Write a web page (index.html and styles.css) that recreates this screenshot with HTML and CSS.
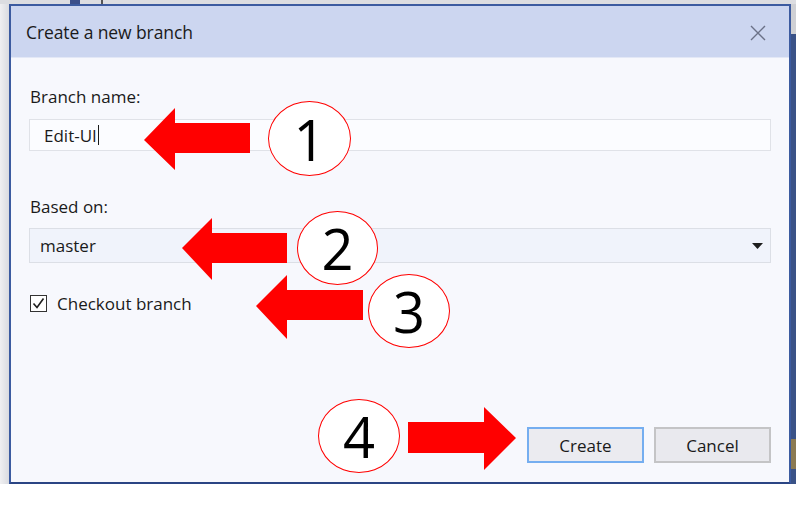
FILE: index.html
```html
<!DOCTYPE html>
<html>
<head>
<meta charset="utf-8">
<link rel="stylesheet" href="styles.css">
</head>
<body>
<div class="screen">
  <div class="topstrip"><span class="tick t1"></span><span class="tick t2"></span></div>
  <div class="row">
    <div class="leftstrip"></div>
    <div class="dialog">
      <div class="titlebar">
        <span class="title">Create a new branch</span>
        <svg class="close" width="18" height="18" viewBox="0 0 18 18"><path d="M2 2 L16 16 M16 2 L2 16" stroke="#6b7187" stroke-width="1.4" fill="none"/></svg>
      </div>
      <div class="content">
        <label class="label first">Branch name:</label>
        <div class="input"><span>Edit-UI</span><span class="caret"></span></div>
        <label class="label second">Based on:</label>
        <div class="select"><span>master</span><svg width="11" height="6" viewBox="0 0 11 6"><path d="M0 0 H11 L5.5 6 Z" fill="#1e1e1e"/></svg></div>
        <div class="check">
          <span class="box"><svg width="15" height="15" viewBox="0 0 15 15"><path d="M2.5 7.5 L6 11.5 L12.5 2.5" stroke="#1e1e1e" stroke-width="1.6" fill="none"/></svg></span>
          <span>Checkout branch</span>
        </div>
        <div class="spacer"></div>
        <div class="buttons">
          <button class="btn primary">Create</button>
          <button class="btn">Cancel</button>
        </div>
      </div>
    </div>
    <div class="rightstrip"><span class="r1"></span><span class="r2"></span></div>
  </div>
</div>

<div class="anno a1">
  <svg width="106" height="62" viewBox="0 0 106 62"><path d="M0 32 L31 0 L31 15 L106 15 L106 45 L31 45 L31 62 Z" fill="#ff0000"/></svg>
</div>
<div class="num n1">1</div>
<div class="anno a2">
  <svg width="105" height="62" viewBox="0 0 105 62"><path d="M0 30 L30 0 L30 15 L105 15 L105 45 L30 45 L30 62 Z" fill="#ff0000"/></svg>
</div>
<div class="num n2">2</div>
<div class="anno a3">
  <svg width="107" height="64" viewBox="0 0 107 64"><path d="M0 31 L31 0 L31 15 L107 15 L107 45 L31 45 L31 64 Z" fill="#ff0000"/></svg>
</div>
<div class="num n3">3</div>
<div class="anno a4">
  <svg width="108" height="63" viewBox="0 0 108 63"><path d="M108 31 L76 0 L76 15 L0 15 L0 46 L76 46 L76 63 Z" fill="#ff0000"/></svg>
</div>
<div class="num n4">4</div>
</body>
</html>
```
FILE: styles.css
```css
html, body { margin: 0; padding: 0; background: #ffffff; }
body { width: 796px; height: 516px; overflow: hidden; position: relative; font-family: "Open Sans", "Noto Sans", sans-serif; }

.screen { height: 484px; display: flex; flex-direction: column; background: #e4e5ea; }
.topstrip { height: 4px; background: #dcdde1; position: relative; flex: none; }
.tick { position: absolute; top: 0; height: 4px; background: #3b4f8a; }
.t1 { left: 70px; width: 10px; }
.t2 { left: 101px; width: 2px; background: #555; }
.row { flex: 1; display: flex; }
.leftstrip { width: 9px; background: linear-gradient(90deg, #f0f0f2, #dadbe0); flex: none; }
.rightstrip { width: 5px; flex: none; background: #3a5287; display: flex; flex-direction: column; }
.rightstrip .r1 { height: 30px; background: #cfd0d4; }
.rightstrip .r2 { margin-top: 405px; height: 30px; background: #8b7a52; }

.dialog { flex: 1; border: 2px solid #3c5ba0; border-bottom-color: #2a4584; display: flex; flex-direction: column; background: #f7f8fd; }
.titlebar { height: 51px; background: #ccd6f0; display: flex; align-items: center; justify-content: space-between; padding: 0 22px 0 15px; border-bottom: 1px solid #e3e8f6; flex: none; }
.title { font-size: 17.5px; color: #1a1a1a; letter-spacing: -0.1px; }
.close { margin-top: 2px; }

.content { flex: 1; display: flex; flex-direction: column; padding: 0 18px 19px 18px; }
.label { font-size: 17px; line-height: 22px; height: 22px; color: #1a1a1a; padding-left: 1px; }
.label.first { margin-top: 28px; }
.label.second { margin-top: 45px; }
.input { margin-top: 11px; height: 30px; border: 1px solid #e0e2e8; background: #fbfcff; display: flex; align-items: center; padding-left: 14px; font-size: 17px; color: #1a1a1a; }
.caret { width: 1px; height: 20px; background: #1a1a1a; margin-left: 1px; }
.select { margin-top: 10px; height: 33px; border: 1px solid #dcdfe6; background: #f0f3fb; display: flex; align-items: center; justify-content: space-between; padding: 0 7px 0 10px; font-size: 17px; color: #1a1a1a; }
.check { margin-top: 29px; height: 22px; display: flex; align-items: center; gap: 10px; font-size: 17px; color: #1a1a1a; padding-left: 1px; }
.box { width: 15px; height: 15px; border: 1px solid #333; background: #fff; display: flex; }
.spacer { flex: 1; }
.buttons { display: flex; justify-content: flex-end; gap: 10px; }
.btn { width: 117px; height: 36px; font-family: inherit; font-size: 17px; color: #1a1a1a; background: #e9e9ee; border: 2px solid #c4c4c6; padding: 0; }
.btn.primary { border: 2px solid #75aef0; background: #ebebf0; }

.anno { position: absolute; line-height: 0; }
.a1 { left: 144px; top: 108px; }
.a2 { left: 182px; top: 218px; }
.a3 { left: 256px; top: 275px; }
.a4 { left: 408px; top: 407px; }

.num { position: absolute; border: 1.5px solid #ff0000; border-radius: 50%; background: #ffffff; box-sizing: border-box; display: flex; align-items: center; justify-content: center; font-family: "Open Sans", "Liberation Sans", sans-serif; font-size: 56px; color: #000; line-height: 1; }
.n1 { left: 268px; top: 101px; width: 83px; height: 75px; }
.n2 { left: 297px; top: 211px; width: 81px; height: 74px; }
.n3 { left: 368px; top: 274px; width: 82px; height: 74px; }
.n4 { left: 318px; top: 399px; width: 82px; height: 74px; }
```
